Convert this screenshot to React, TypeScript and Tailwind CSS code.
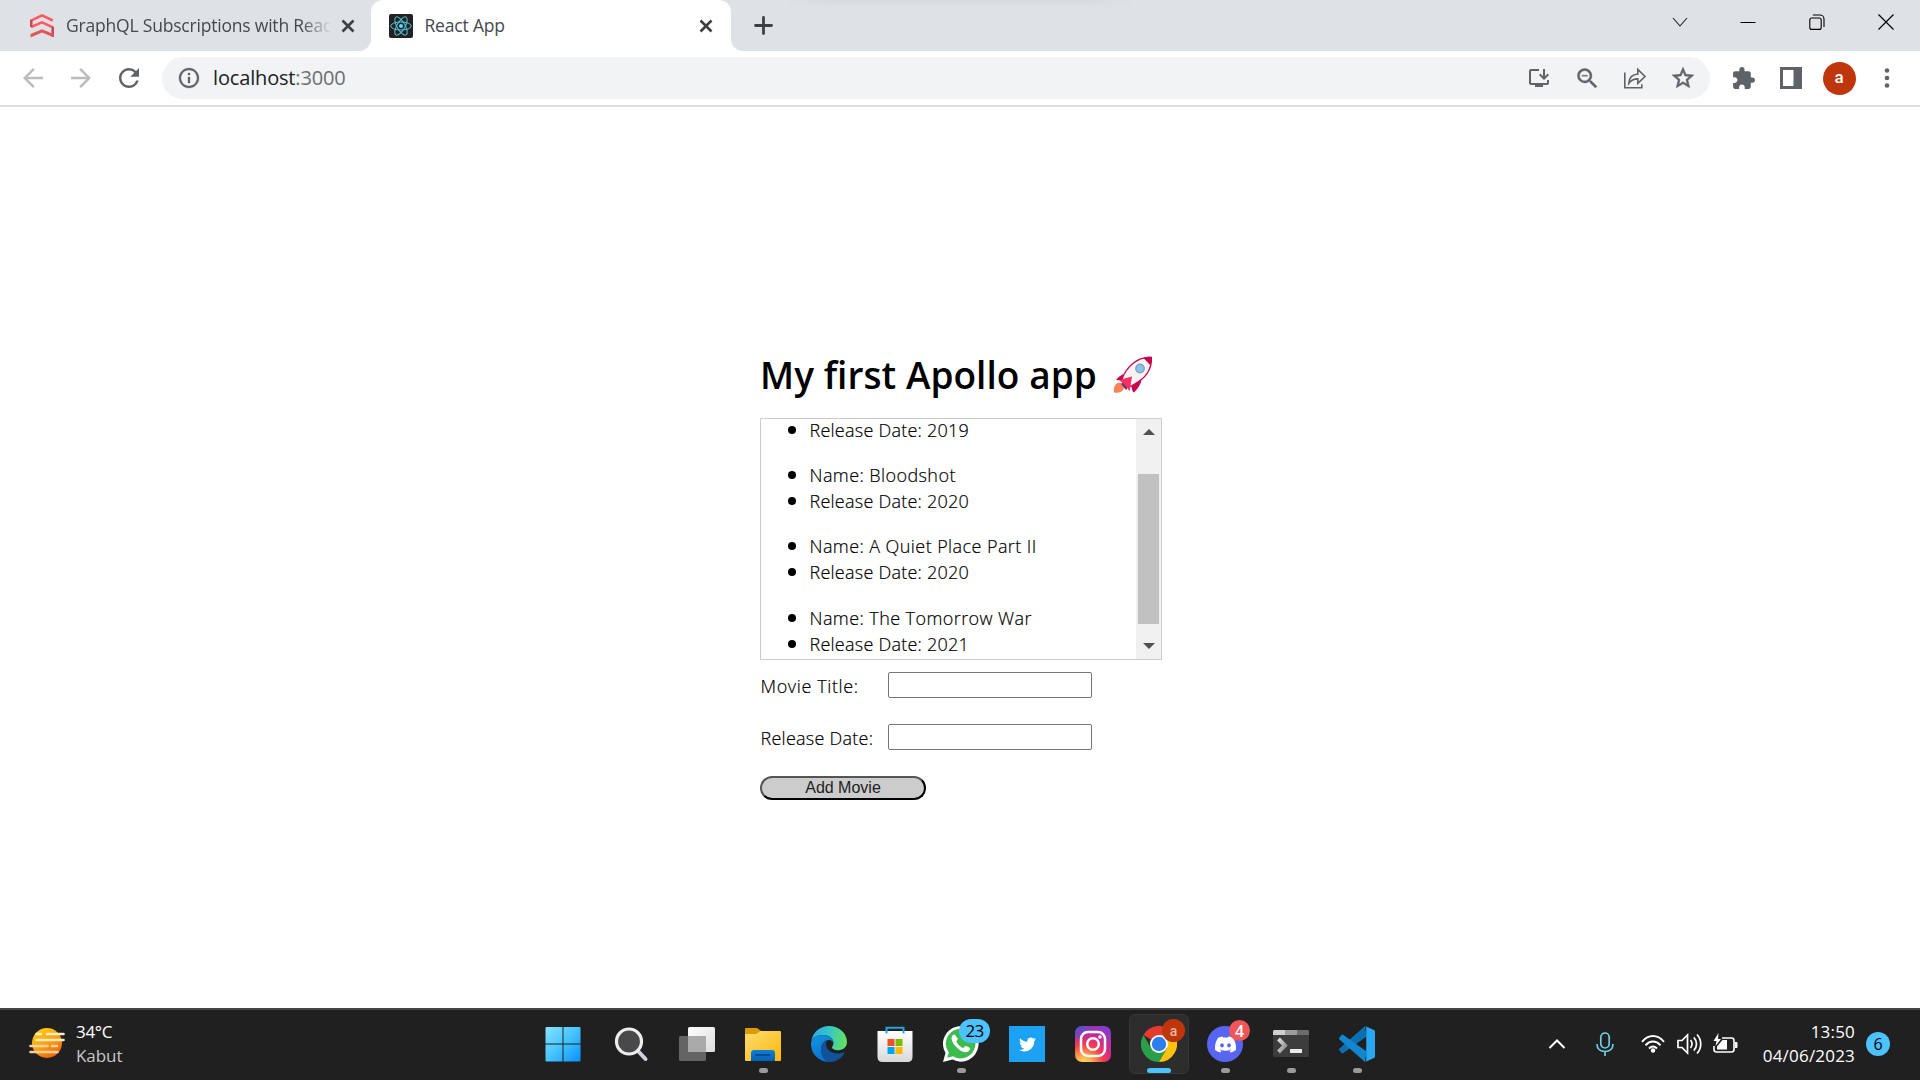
import React from "react";
import {
  MdArrowBack,
  MdArrowForward,
  MdRefresh,
  MdInfoOutline,
  MdOutlineInstallDesktop,
  MdZoomOut,
  MdStarBorder,
  MdExtension,
} from "react-icons/md";
import { FaDiscord, FaTwitter } from "react-icons/fa";

const UI = "font-['Open_Sans',sans-serif]";

function Close({ className = "" }: { className?: string }) {
  return (
    <svg className={className} width="14" height="14" viewBox="0 0 14 14" stroke="#3c4043" strokeWidth="2.6">
      <path d="M1.5 1.5l11 11M12.5 1.5l-11 11" />
    </svg>
  );
}

function ApolloFavicon() {
  return (
    <svg width="24" height="24" viewBox="0 0 24 24" fill="none" stroke="#ff5a5f" strokeWidth="2.5">
      <path d="M1.1 12V6.5L12 1.3l10.8 5.2" />
      <path d="M1.1 13L12 8.3l10.8 5V22.5" />
      <path d="M1.1 6v7" stroke="#c5494f" />
      <path d="M22.9 13v10" stroke="#c5494f" />
      <path d="M.6 23.500v-3.500L12 15.2 23.5 20v3.2L12 18.500z" fill="#e0545a" stroke="none" />
    </svg>
  );
}

function ReactFavicon() {
  return (
    <svg width="24" height="24" viewBox="0 0 24 24" fill="none" stroke="#56c5de" strokeWidth="1">
      <rect width="24" height="24" rx="2" fill="#222" stroke="none" />
      <circle cx="12" cy="12" r="2" fill="#61dafb" stroke="none" />
      <ellipse cx="12" cy="12" rx="10.3" ry="4" />
      <ellipse cx="12" cy="12" rx="10.3" ry="4" transform="rotate(60 12 12)" />
      <ellipse cx="12" cy="12" rx="10.3" ry="4" transform="rotate(120 12 12)" />
    </svg>
  );
}

function TabStrip() {
  return (
    <div className="relative flex h-[51px] w-full bg-[#dee1e6] text-[#45494d]">
      <div className="absolute left-[785px] top-0 h-2 w-[350px] bg-linear-to-b from-[#d6d9de] to-[#dee1e6] [mask-image:linear-gradient(to_right,transparent,black_15%,black_85%,transparent)]" />
      <div className="flex h-full w-[371px] items-center pl-[30px]">
        <ApolloFavicon />
        <div className="ml-3 w-[264px] whitespace-nowrap [mask-image:linear-gradient(to_right,black_235px,transparent_266px)]">
          <span className="text-[17.5px] leading-6 tracking-[-0.2px]">GraphQL Subscriptions with Reac</span>
        </div>
        <Close className="ml-[11px]" />
      </div>
      <div className="relative flex h-full w-[360px] items-center rounded-t-xl bg-white pl-[18px]">
        <svg className="absolute bottom-0 -left-3" width="12" height="12">
          <path d="M12 0v12H0A12 12 0 0 0 12 0z" fill="#fff" />
        </svg>
        <svg className="absolute -right-3 bottom-0" width="12" height="12">
          <path d="M0 0v12h12A12 12 0 0 1 0 0z" fill="#fff" />
        </svg>
        <ReactFavicon />
        <span className="mb-px ml-[11.500px] w-[274.500px] text-[17.5px] leading-6 tracking-[-0.18px]">React App</span>
        <Close />
      </div>
      <div className="flex flex-1 items-center pl-[23px]">
        <svg width="19" height="19" viewBox="0 0 19 19" stroke="#3c4043" strokeWidth="2.8" strokeLinecap="round">
          <path d="M9.5 1.5v16M1.5 9.5h16" />
        </svg>
      </div>
      <div className="flex h-[43px] items-center text-black">
        <div className="flex w-[69px] justify-center">
          <svg width="16" height="16" fill="none" stroke="#222" strokeWidth="1.1"><path d="M1 4l7 8 7-8" /></svg>
        </div>
        <div className="flex w-[68px] justify-center">
          <svg width="16" height="16" stroke="#000" strokeWidth="1"><path d="M.5 8.500h15" /></svg>
        </div>
        <div className="flex w-[69px] justify-center">
          <svg width="16" height="16" fill="none" stroke="#000" strokeWidth="1.1">
            <rect x=".8" y="4" width="11.4" height="11.4" rx="2" />
            <path d="M3.8 1H11a4 4 0 0 1 4 4v8" />
          </svg>
        </div>
        <div className="flex w-[69px] justify-center">
          <svg width="16" height="16" stroke="#000" strokeWidth="1.2"><path d="M.5.5l15 15M15.5.5l-15 15" /></svg>
        </div>
      </div>
    </div>
  );
}

function ShareIcon() {
  return (
    <svg width="24" height="24" viewBox="0 0 24 24" fill="none" stroke="#5f6368" strokeWidth="1.6">
      <path d="M1.8 6.5v15.3h17v-3.6" />
      <path d="M5.8 17.2c.4-6 3.6-8.8 9-9.2V3.5l7.2 7-7.2 6.8v-4.4c-4 0-6.8 1.3-9 4.3z" strokeLinejoin="miter" />
    </svg>
  );
}

function Toolbar() {
  return (
    <div className="flex h-[56px] items-center border-b-2 border-[#dadce0] bg-white text-[#5f6368]">
      <div className="flex w-[162px] items-center pl-[9px]">
        <div className="flex w-12 justify-center text-[#babcbe]"><MdArrowBack size={30} /></div>
        <div className="flex w-12 justify-center text-[#babcbe]"><MdArrowForward size={30} /></div>
        <div className="flex w-12 justify-center"><MdRefresh size={30} /></div>
      </div>
      <div className="flex h-[42px] w-[1548px] items-center rounded-full bg-[#f1f3f4] pl-[15px] pr-[3px]">
        <MdInfoOutline size={24} className="[&>path[fill=none]]:stroke-none" stroke="#5f6368" strokeWidth={0.3} />
        <div className="ml-3 flex-1 text-[20px] leading-7 tracking-[-0.16px] text-[#6b6f73]">
          <span className="text-[#202124]">localhost</span>:3000
        </div>
        <div className="flex w-12 justify-center"><MdOutlineInstallDesktop size={24} /></div>
        <div className="flex w-12 justify-center"><MdZoomOut size={27} className="[&>path[fill=none]]:stroke-none" stroke="#5f6368" strokeWidth={0.3} /></div>
        <div className="flex w-12 justify-center"><ShareIcon /></div>
        <div className="flex w-12 justify-center"><MdStarBorder size={26} className="[&>path[fill=none]]:stroke-none" stroke="#5f6368" strokeWidth={0.5} /></div>
      </div>
      <div className="flex items-center pl-[9px]">
        <div className="flex w-12 justify-center"><MdExtension size={25} /></div>
        <div className="flex w-12 justify-center">
          <svg width="22" height="22">
            <path d="M0 0h22v22H0zM3 3v16h10.500V3z" fill="#5f6368" fillRule="evenodd" />
          </svg>
        </div>
        <div className="flex w-12 justify-center">
          <div className="flex size-[33px] items-center justify-center rounded-full bg-[#bf360c] pb-px font-['Roboto',sans-serif] text-[17px] font-medium text-white">a</div>
        </div>
        <div className="flex w-12 justify-center">
          <svg width="6" height="20" fill="#5f6368">
            <circle cx="3" cy="2.500" r="2.300" /><circle cx="3" cy="10" r="2.300" /><circle cx="3" cy="17.500" r="2.300" />
          </svg>
        </div>
      </div>
    </div>
  );
}

function Rocket() {
  return (
    <svg width="40" height="38" viewBox="0 0 40 38">
      <path d="M3 28c4-3 8 0 8 4-1 4-5 5.500-10 4.500C.5 33 1 30 3 28z" fill="#ff8257" />
      <path d="M8 28l4-4 5 5-4 5z" fill="#6a3a66" />
      <path d="M11 18c2-1.500 4.500-1 6 0l-5 6.500-9-.5c2-3 5-5 8-6z" fill="#c8054f" />
      <path d="M28 21c1.500 4-1 9-7 15.500-1.500-.5-2.500-3.500-2.500-8z" fill="#c8054f" />
      <path d="M38.300 1.500c1 9-4 18.500-12 23.500-3 2-5.500 3.500-8.500 5.500L9 23C13 12 24 0 38.300 1.500z" fill="#f4f4f4" stroke="#c8054f" strokeWidth="1.300" />
      <path d="M38.800 1C36 .3 33 .8 30.500 2l7 7.500c1.200-2.500 1.700-5.500 1.300-8.500z" fill="#c8054f" />
      <path d="M6 24l13-3.500-2.500 15c-2-4-5.500-8-10.500-11.500z" fill="#ff2e63" />
      <circle cx="27" cy="12.500" r="4.200" fill="#7cc8ff" stroke="#949aa5" strokeWidth="1.400" />
    </svg>
  );
}

type Movie = { name?: string; date: string; gap: string };

const MOVIES: Movie[] = [
  { date: "Release Date: 2019", gap: "" },
  { name: "Name: Bloodshot", date: "Release Date: 2020", gap: "mt-[19px]" },
  { name: "Name: A Quiet Place Part II", date: "Release Date: 2020", gap: "mt-[19px]" },
  { name: "Name: The Tomorrow War", date: "Release Date: 2021", gap: "mt-5" },
];

function Bullet({ text, tracking }: { text: string; tracking: string }) {
  return (
    <li className="flex h-[26px] items-center whitespace-nowrap">
      <span className="size-[7.500px] shrink-0 rounded-full bg-black" />
      <span className={`ml-[14px] text-[18px] font-light leading-[26px] [-webkit-text-stroke:0.2px_black] ${tracking}`}>{text}</span>
    </li>
  );
}

function MovieList() {
  return (
    <div className="mt-[14px] flex h-[242px] w-[402px] overflow-hidden border border-[#ccc]">
      <div className="-mt-[2px] flex flex-1 flex-col pl-[27px]">
        {MOVIES.map((m, i) => (
          <ul key={i} className={m.gap}>
            {m.name && <Bullet text={m.name} tracking="tracking-[0.42px]" />}
            <Bullet text={m.date} tracking="tracking-[0.24px]" />
          </ul>
        ))}
      </div>
      <div className="flex w-[25px] flex-col items-center bg-[#f0f0f0]">
        <svg className="mt-[10px]" width="12" height="6"><path d="M0 6L6 0l6 6z" fill="#505050" /></svg>
        <div className="mt-[39px] h-[150px] w-[21px] bg-[#c1c1c1]" />
        <svg className="mt-[19px]" width="12" height="6"><path d="M0 0l6 6 6-6z" fill="#505050" /></svg>
      </div>
    </div>
  );
}

function Field({ label, tracking }: { label: string; tracking: string }) {
  return (
    <label className="flex h-[52px] items-start">
      <span className={`mt-px w-[128px] whitespace-nowrap pl-[0.5px] text-[18px] font-light leading-[26px] [-webkit-text-stroke:0.2px_black] ${tracking}`}>{label}</span>
      <input className="h-[26px] w-[204px] rounded-[2px] border border-[#767676] bg-white outline-none" />
    </label>
  );
}

function Page() {
  return (
    <main className="h-[901px] bg-white pl-[760px] text-black">
      <h1 className="mt-[243px] flex h-[54px] items-center pb-[4px] text-[37px] font-semibold leading-[50px]">
        <span className="w-[353px] whitespace-nowrap tracking-[0.05px]">My first Apollo app</span>
        <Rocket />
      </h1>
      <MovieList />
      <form className="mt-3">
        <Field label="Movie Title:" tracking="tracking-[0.62px]" />
        <Field label="Release Date:" tracking="tracking-[0.25px]" />
        <button type="button" className="flex h-6 w-[166px] items-center justify-center rounded-full border-2 border-b-black border-l-[#555] border-r-black border-t-[#555] bg-[#ccc] font-['Liberation_Sans',sans-serif] text-base leading-5 text-[#222]">
          Add Movie
        </button>
      </form>
    </main>
  );
}

function Weather() {
  return (
    <svg width="36" height="32" viewBox="0 0 36 32">
      <defs>
        <linearGradient id="sun" x1=".2" y1="0" x2=".8" y2="1">
          <stop offset="0" stopColor="#ffcf10" /><stop offset=".55" stopColor="#ff9a10" /><stop offset="1" stopColor="#e85a10" />
        </linearGradient>
      </defs>
      <circle cx="18" cy="16" r="15" fill="url(#sun)" />
      <g strokeWidth="2.600" strokeLinecap="round" fill="none">
        <path d="M7.500 7h4.500M18 7h16.500M7.500 13h27" stroke="#fdebc4" />
        <path d="M1.500 19h17M23 19h5M1.500 25h27" stroke="#f3d39a" />
      </g>
    </svg>
  );
}

function WindowsLogo() {
  return (
    <svg className="-ml-1" width="36" height="36" viewBox="0 0 36 36">
      <defs>
        <linearGradient id="win" x1="0" y1="0" x2="1" y2="1" gradientUnits="objectBoundingBox">
          <stop offset="0" stopColor="#86e3ff" /><stop offset=".5" stopColor="#45c4ff" /><stop offset="1" stopColor="#0a8fff" />
        </linearGradient>
      </defs>
      <path d="M1.500 1h16v16.500H.5V2q0-1 1-1zM18.500 1h16q1 0 1 1v15.500h-17zM.5 18.500h17v17h-16q-1 0-1-1zM18.500 18.500h17v16q0 1-1 1h-16z" fill="url(#win)" />
    </svg>
  );
}

function SearchIcon() {
  return (
    <svg width="36" height="36" viewBox="0 0 36 36">
      <path d="M25 25l7.500 8" stroke="#cfd2d8" strokeWidth="4" strokeLinecap="round" />
      <circle cx="16" cy="15.500" r="12.500" fill="#494949" stroke="#eceef0" strokeWidth="3.200" />
    </svg>
  );
}

function TaskView() {
  return (
    <svg width="36" height="36" viewBox="0 0 36 36">
      <defs>
        <linearGradient id="tv" x1="0" y1="0" x2="1" y2="1"><stop offset="0" stopColor="#fff" /><stop offset="1" stopColor="#dcdcdc" /></linearGradient>
      </defs>
      <rect x="9" y="1" width="27" height="25" rx="1.500" fill="url(#tv)" />
      <rect x="0" y="10" width="27" height="25" rx="1.500" fill="#646464" />
      <path d="M9 10h16.500q1.500 0 1.500 1.500V26H9z" fill="#aaa" />
    </svg>
  );
}

function Folder() {
  return (
    <svg width="36" height="36" viewBox="0 0 36 36">
      <defs>
        <linearGradient id="fo" x1="0" y1="0" x2="1" y2="1"><stop offset="0" stopColor="#ffdc72" /><stop offset="1" stopColor="#fcb808" /></linearGradient>
        <linearGradient id="fb" x1="0" y1="0" x2="0" y2="1"><stop offset="0" stopColor="#0e7fd8" /><stop offset="1" stopColor="#0560b5" /></linearGradient>
      </defs>
      <path d="M0 3q0-1 1-1h10q1.500 0 2.500 1L16 5v5H0z" fill="#dc9a05" />
      <path d="M0 8h10c3 0 4-3 6-3h19q1 0 1 1v28q0 1-1 1H1q-1 0-1-1z" fill="url(#fo)" />
      <path d="M6 35V27q0-3 3-3h18q3 0 3 3v8z" fill="url(#fb)" />
      <path d="M11 29h13.500" stroke="#084a94" strokeWidth="1.800" strokeLinecap="round" />
    </svg>
  );
}

function Edge() {
  return (
    <svg width="36" height="36" viewBox="0 0 36 36">
      <defs>
        <linearGradient id="e1" x1="0" y1=".3" x2="1" y2=".4"><stop offset="0" stopColor="#2aa8e6" /><stop offset=".5" stopColor="#35c8c8" /><stop offset="1" stopColor="#66e05a" /></linearGradient>
        <linearGradient id="e2" x1="0" y1="0" x2=".5" y2="1"><stop offset="0" stopColor="#1297e0" /><stop offset="1" stopColor="#0b6fcc" /></linearGradient>
      </defs>
      <path d="M.3 15C1.500 6.500 9 0 18 0c10 0 18 7 18 16 0 5-4 8.200-8.500 8.200-4 0-6.500-1.400-6.500-3 0-.8 1.500-1.800 1.500-4.200C22.500 12.500 18 9 12 9 6 9 2 11.500.3 15z" fill="url(#e1)" />
      <path d="M0 18C0 12.500 5 9 11.500 9c6 0 11 3.500 11 8-1-2-2.500-3-4.500-3-4.500 0-8 4.500-8 9.500 0 6 4 11.500 9 12.400C8 36.500 0 28 0 18z" fill="url(#e2)" />
      <path d="M16 14.500C12 16 10 19.500 10 23.500 10 30 15 36 20 36c5.500-.5 10.500-4 13.200-8.800.3-.7-.2-1-.8-.8-1.600.7-3.600 1.100-5.400 1.100-7 0-12-4-12-9.500 0-1.300.3-2.500 1-3.500z" fill="#10529c" />
    </svg>
  );
}

function Store() {
  return (
    <svg width="36" height="36" viewBox="0 0 36 36">
      <defs>
        <linearGradient id="st" x1="0" y1="0" x2="0" y2="1"><stop offset="0" stopColor="#fff" /><stop offset="1" stopColor="#d9d9d9" /></linearGradient>
      </defs>
      <path d="M.5 5h35v26q0 5-5 5h-25q-5 0-5-5z" fill="url(#st)" />
      <path d="M9.500 7.500V1.800h17v5.700" fill="none" stroke="#22a5df" strokeWidth="2" />
      <path d="M10.500 13h7v7h-7z" fill="#f25022" /><path d="M18.500 13h7v7h-7z" fill="#7fba00" />
      <path d="M10.500 21h7v7h-7z" fill="#00a4ef" /><path d="M18.500 21h7v7h-7z" fill="#ffb900" />
    </svg>
  );
}

function WhatsApp() {
  return (
    <svg width="36" height="36" viewBox="0 0 36 36">
      <path d="M0 36l2.500-9A17.800 17.800 0 1 1 9.500 33.600z" fill="#fff" />
      <path d="M4.300 31.800l1.500-5.300A14.800 14.800 0 1 1 10 30.300z" fill="#3dbb4d" />
      <path d="M12.500 9.500c-.7-1.500-1.800-1.200-2.500-.6-2.800 2.800-1.200 7 2.400 11.200 4.200 4.800 9 7.500 12.800 5.300 1.800-1 2.200-3 1.700-3.500-.7-.7-3.300-2-4.400-2-1 0-1.600 2.300-2.600 2-2.300-.8-5.300-3.600-6.400-6 -.4-1 1.300-1.800 1.300-2.800 0-.8-1.500-2.400-2.300-3.600z" fill="#fff" />
    </svg>
  );
}

function Instagram() {
  return (
    <svg width="36" height="36" viewBox="0 0 36 36">
      <defs>
        <radialGradient id="ig" cx=".25" cy="1.050" r="1.100">
          <stop offset="0" stopColor="#ffe070" /><stop offset=".2" stopColor="#fdb04c" /><stop offset=".48" stopColor="#f4404e" /><stop offset=".7" stopColor="#d42a86" /><stop offset="1" stopColor="#8a3ac8" />
        </radialGradient>
        <radialGradient id="ig2" cx="0" cy="0" r=".5"><stop offset="0" stopColor="#3d5bd8" /><stop offset="1" stopColor="#3d5bd8" stopOpacity="0" /></radialGradient>
      </defs>
      <rect width="36" height="36" rx="7" fill="url(#ig)" />
      <rect width="36" height="36" rx="7" fill="url(#ig2)" />
      <g fill="none" stroke="#fff" strokeWidth="2.500">
        <rect x="6" y="6" width="24" height="24" rx="7" />
        <circle cx="18" cy="18" r="5.800" />
      </g>
      <circle cx="25" cy="11" r="1.800" fill="#fff" />
    </svg>
  );
}

function Chrome() {
  return (
    <svg width="36" height="36" viewBox="0 0 36 36">
      <path d="M18 18L2.400 9A18 18 0 0 1 33.600 9z" fill="#e33b2e" />
      <path d="M2.400 9A18 18 0 0 0 18 36l7.800-13.500L18 18 10.200 22.500z" fill="#2a9e48" />
      <path d="M33.600 9A18 18 0 0 1 18 36l7.800-13.500L25.800 13.500 18 9z" fill="#fdc20c" />
      <path d="M18 9h15.600L30 5 18 3z" fill="#e33b2e" />
      <circle cx="18" cy="18" r="9" fill="#fff" />
      <circle cx="18" cy="18" r="7.200" fill="#2c7df0" />
    </svg>
  );
}

function Terminal() {
  return (
    <svg width="36" height="36" viewBox="0 0 36 36">
      <defs>
        <linearGradient id="te" x1="0" y1="0" x2="1" y2="1"><stop offset="0" stopColor="#dedede" /><stop offset="1" stopColor="#8a8a8a" /></linearGradient>
      </defs>
      <rect y="4" width="36" height="27" rx="1.500" fill="#3c3c3c" />
      <path d="M0 9V5.500Q0 4 1.500 4H12v5z" fill="#cfcfcf" /><path d="M12 4h12v5H12z" fill="#9c9c9c" /><path d="M24 4h10.500Q36 4 36 5.500V9H24z" fill="#6c6c6c" />
      <path d="M5.500 13l6.500 6.500L5.500 26" fill="none" stroke="url(#te)" strokeWidth="4" />
      <rect x="17" y="23" width="12" height="4" fill="#ececec" />
    </svg>
  );
}

function VSCode() {
  return (
    <svg width="36" height="36" viewBox="0 0 36 36">
      <path d="M.5 24.500q-1-1 0-2L26 0l1.500 10.500L4.500 27q-1 .8-2 0z" fill="#0b70b3" />
      <path d="M.5 11.500q-1 1 0 2L26 36l1.500-10.500L4.500 9q-1-.8-2 0z" fill="#1287cf" />
      <path d="M26 0l9 4q1 .5 1 2v24q0 1.500-1 2l-9 4q1.500-1 1.500-3V3q0-2-1.500-3z" fill="#28a8f0" />
      <path d="M27.500 2v32l7-2.500q1.500-.5 1.500-2v-23q0-1.500-1.500-2z" fill="#28a8f0" />
    </svg>
  );
}

function Discord() {
  return (
    <div className="flex size-9 items-center justify-center rounded-full bg-[#5865f2] text-white">
      <FaDiscord size={23} />
    </div>
  );
}

function Twitter() {
  return (
    <div className="flex size-9 items-center justify-center bg-[#1da1f2] text-white">
      <FaTwitter size={17} />
    </div>
  );
}

type Task = { icon: React.ReactNode; running?: boolean; active?: boolean; badge?: React.ReactNode };

const TASKS: Task[] = [
  { icon: <WindowsLogo /> },
  { icon: <SearchIcon /> },
  { icon: <TaskView /> },
  { icon: <Folder />, running: true },
  { icon: <Edge /> },
  { icon: <Store /> },
  {
    icon: <WhatsApp />,
    running: true,
    badge: <span className="absolute left-[28px] top-[5px] flex h-6 w-[31px] items-center justify-center rounded-full bg-[#4cc2ff] text-[17px] leading-6 tracking-[-0.8px] text-black">23</span>,
  },
  { icon: <Twitter /> },
  { icon: <Instagram /> },
  {
    icon: <Chrome />,
    active: true,
    badge: <span className="absolute left-[32px] top-[4px] flex size-[23px] items-center justify-center rounded-full bg-[#bf360c] font-['Roboto',sans-serif] text-[14px] font-medium leading-5 text-[#e8b8a8]">a</span>,
  },
  {
    icon: <Discord />,
    running: true,
    badge: <span className="absolute left-[34px] top-[6px] flex size-[21px] items-center justify-center rounded-full bg-[#f05659] text-[16px] font-semibold leading-5 text-white">4</span>,
  },
  { icon: <Terminal />, running: true },
  { icon: <VSCode />, running: true },
];

function Taskbar() {
  return (
    <footer className="flex h-[72px] border-t-2 border-[#454545] bg-[#202020] text-white">
      <div className="flex w-[532px] pl-[29px] pt-[17px]">
        <Weather />
        <div className="ml-[11px] -mt-[7px] flex flex-col text-[17px] leading-6 tracking-[-0.3px]">
          <span>34°C</span>
          <span className="tracking-[-0.05px] text-[#c8c8c8]">Kabut</span>
        </div>
      </div>
      <div className="flex">
        {TASKS.map((t, i) => (
          <div key={i} className="flex w-[66px] justify-center pt-1">
            <div className={t.active ? "relative flex h-[60px] w-[60px] flex-col items-center rounded-md border border-[#373737] bg-[#2d2d2d] pt-[11px]" : "relative flex h-[60px] w-[60px] flex-col items-center pt-3"}>
              {t.icon}
              {t.running && <span className="mt-1.5 h-[5px] w-[9px] rounded-full bg-[#9a9a9a]" />}
              {t.active && <span className="mt-1.5 h-[5px] w-6 rounded-full bg-[#4cc2ff]" />}
              {t.badge}
            </div>
          </div>
        ))}
      </div>
      <div className="flex h-[68px] flex-1 items-center justify-end pr-[30px]">
        <svg width="18" height="10" fill="none" stroke="#fff" strokeWidth="2"><path d="M1.500 9L9 1.500 16.500 9" /></svg>
        <svg className="ml-[30px]" width="18" height="24" fill="none" stroke="#6fd0e4" strokeWidth="1.700">
          <rect x="4.800" y="1" width="8.400" height="15" rx="4.200" /><path d="M1 12c0 5 3.500 7.500 8 7.500s8-2.500 8-7.500M9 19.500V24" />
        </svg>
        <svg className="ml-[27px]" width="24" height="20" fill="none" stroke="#fff" strokeWidth="1.900">
          <path d="M1 7.800c6.500-7.700 15.500-7.700 22 0M4.500 11.300c4.500-5 10.500-5 15 0M8 14.500c2.500-2.700 5.500-2.700 8 0" /><circle cx="12" cy="16.500" r="2.200" fill="#fff" stroke="none" />
        </svg>
        <svg className="ml-3" width="25" height="22" fill="none" stroke="#fff" strokeWidth="1.700">
          <path d="M1 7.500h4L10.500 2v18L5 14.500H1zM13.500 7c2 2.200 2 5.800 0 8M16.800 4.300c3.600 3.800 3.600 9.600 0 13.400M20 1.500c5 5.500 5 13.500 0 19" />
        </svg>
        <svg className="ml-[11px]" width="25" height="22" fill="none" stroke="#fff" strokeWidth="1.600">
          <path d="M9 5h9.500q2.500 0 2.500 2.500v9q0 2.500-2.500 2.500h-15Q1 19 1 16.500V13" />
          <path d="M22 9h1.500q1 0 1 1v4q0 1-1 1H22z" fill="#fff" stroke="none" />
          <path d="M4 16.500v-3L9.500 7H14v9.500z" fill="#fff" stroke="none" />
          <path d="M5.500 0L.5 8h3L2.500 13 8 6H5z" fill="#fff" stroke="none" />
        </svg>
        <div className="ml-[24px] flex w-[93px] flex-col items-end whitespace-nowrap text-[17px] leading-6 tracking-[0.2px]">
          <span>13:50</span>
          <span>04/06/2023</span>
        </div>
        <span className="ml-[11px] flex size-6 items-center justify-center rounded-full bg-[#4cc2ff] text-[16px] leading-6 text-black">6</span>
      </div>
    </footer>
  );
}

export default function App() {
  return (
    <div className={`flex h-[1080px] w-[1920px] flex-col overflow-hidden bg-white ${UI}`}>
      <TabStrip />
      <Toolbar />
      <Page />
      <Taskbar />
    </div>
  );
}
